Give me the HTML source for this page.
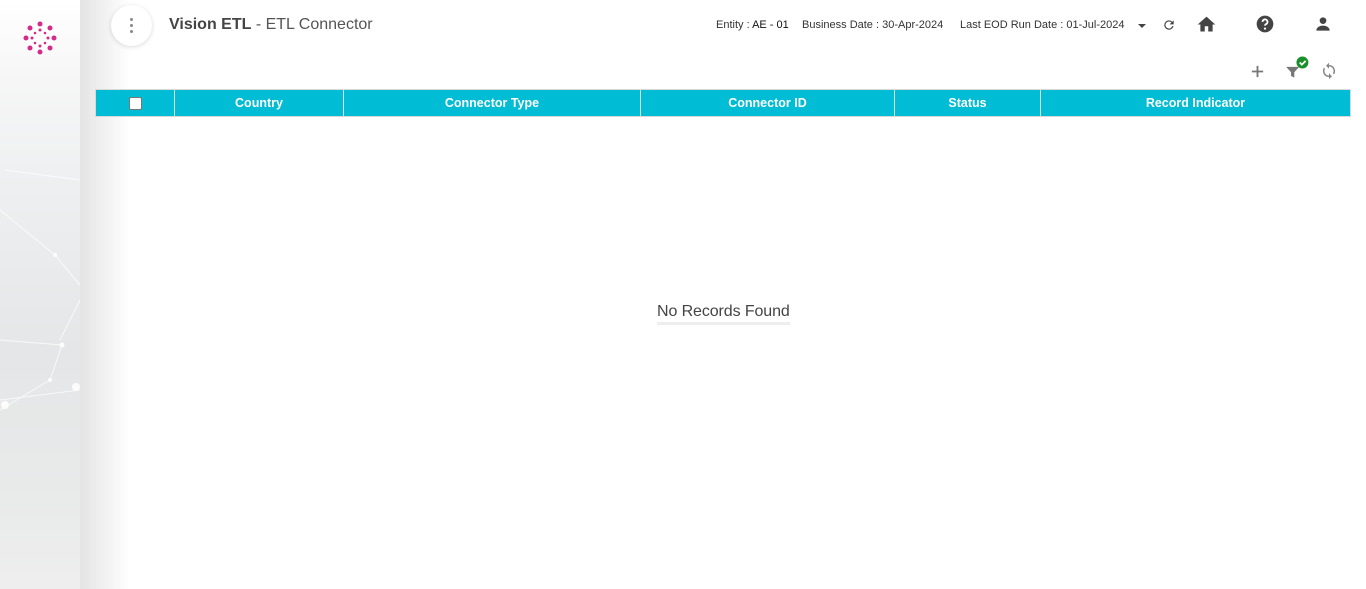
<!DOCTYPE html>
<html><head><meta charset="utf-8"><style>
*{margin:0;padding:0;box-sizing:border-box}
body{width:1366px;height:589px;overflow:hidden;background:#fff;font-family:"Liberation Sans",sans-serif;position:relative}
.side{position:absolute;left:0;top:0;width:80px;height:589px;background:linear-gradient(180deg,#fff 0%,#f7f7f7 12%,#eceeef 35%,#e4e6e7 60%,#e9eaea 85%,#eeeeee 100%);z-index:2}
.shadow{position:absolute;left:80px;top:0;width:50px;height:589px;background:linear-gradient(90deg,#e4e4e4,rgba(255,255,255,0));}
.menu{position:absolute;left:111px;top:5px;width:41px;height:41px;border-radius:50%;background:#fff;box-shadow:0 1px 5px rgba(0,0,0,.15);z-index:3}
.menu i{position:absolute;left:19px;width:3px;height:3px;border-radius:50%;background:#888}
.title{position:absolute;left:169px;top:16px;font-size:16px;color:#555}
.title b{color:#444}
.info{position:absolute;top:19px;font-size:11px;color:#333}
.hdr{position:absolute;left:95px;top:89px;width:1256px;height:28px;background:#00bcd4;display:flex;border:1px solid #d8d8d8}
.hdr div{border-right:1px solid #dde;color:#fff;font-size:12.5px;font-weight:bold;display:flex;align-items:center;justify-content:center}
.nr{position:absolute;left:657px;top:303px;font-size:16px;color:#444;border-bottom:3px solid #eee;padding-bottom:1px;letter-spacing:-.1px}
</style></head><body>
<div class="shadow"></div>
<div class="side">
<svg width="80" height="589" style="position:absolute;left:0;top:0;opacity:.9">
<g stroke="#fff" stroke-width="1" opacity=".8" fill="none">
<path d="M0 210 L55 255 L80 285"/><path d="M0 340 L62 345 L50 380 L0 410"/><path d="M80 300 L60 340"/><path d="M0 400 L80 390"/><path d="M5 170 L80 180"/>
</g>
<g fill="#fff"><circle cx="55" cy="255" r="2"/><circle cx="62" cy="345" r="2.5"/><circle cx="50" cy="380" r="2"/><circle cx="5" cy="405" r="4"/><circle cx="76" cy="387" r="4"/></g>
<circle cx="40" cy="38" r="14" fill="#fff"/>
<g fill="#d0157e">
<circle cx="40" cy="24" r="2.5"/><circle cx="40" cy="52" r="2.5"/><circle cx="26" cy="38" r="2.5"/><circle cx="54" cy="38" r="2.5"/>
<circle cx="30" cy="28" r="2.5"/><circle cx="50" cy="28" r="2.5"/><circle cx="30" cy="48" r="2.5"/><circle cx="50" cy="48" r="2.5"/>
<circle cx="40" cy="30" r="1.5"/><circle cx="40" cy="46" r="1.5"/><circle cx="32" cy="38" r="1.5"/><circle cx="48" cy="38" r="1.5"/>
<circle cx="35" cy="33" r="1.3"/><circle cx="45" cy="33" r="1.3"/><circle cx="35" cy="43" r="1.3"/><circle cx="45" cy="43" r="1.3"/>
</g></svg>
</div>
<div class="menu"><i style="top:13px"></i><i style="top:19px"></i><i style="top:25px"></i></div>
<div class="title"><b>Vision ETL</b> - ETL Connector</div>
<div class="info" style="left:716px">Entity : <span style="color:#111">AE - 01</span></div>
<div class="info" style="left:802px">Business Date : 30-Apr-2024</div>
<div class="info" style="left:960px">Last EOD Run Date : 01-Jul-2024</div>
<svg style="position:absolute;left:1137px;top:23px" width="10" height="6"><path d="M1 1h8l-4 4z" fill="#444"/></svg>
<svg style="position:absolute;left:1162px;top:18px" width="14" height="14" viewBox="0 0 24 24"><path d="M17.6 6.4A8 8 0 1 0 19.7 14h-2.1A6 6 0 1 1 12 6c1.7 0 3.1.7 4.2 1.8L13 11h7V4z" fill="#444"/></svg>
<svg style="position:absolute;left:1196px;top:14px" width="21" height="21" viewBox="0 0 24 24"><path d="M10 20v-6h4v6h5v-8h3L12 3 2 12h3v8z" fill="#444"/></svg>
<svg style="position:absolute;left:1255px;top:14px" width="20" height="20" viewBox="0 0 24 24"><circle cx="12" cy="12" r="10" fill="#444"/><path d="M9 9.5a3 3 0 1 1 4 2.8c-.7.4-1 .9-1 1.7" stroke="#fff" stroke-width="2.2" fill="none"/><circle cx="12" cy="17.5" r="1.3" fill="#fff"/></svg>
<svg style="position:absolute;left:1313px;top:14px" width="20" height="20" viewBox="0 0 24 24"><circle cx="12" cy="8" r="4" fill="#444"/><path d="M4 20c0-4 4-6 8-6s8 2 8 6z" fill="#444"/></svg>
<svg style="position:absolute;left:1249px;top:63px" width="17" height="17" viewBox="0 0 24 24"><path d="M12 4v16M4 12h16" stroke="#777" stroke-width="2.6"/></svg>
<svg style="position:absolute;left:1284px;top:56px" width="26" height="26" viewBox="0 0 24 24"><path d="M2 10h12l-4.5 5v5l-3-1.5V15z" fill="#777"/><circle cx="17" cy="6" r="5.5" fill="#1a8f2a"/><path d="M14.5 6l2 2 3.5-3.5" stroke="#fff" stroke-width="1.6" fill="none"/></svg>
<svg style="position:absolute;left:1320px;top:61px" width="18" height="20" viewBox="0 0 24 24"><path d="M12 4V1L8 5l4 4V6a6 6 0 0 1 5.2 9l1.5 1.5A8 8 0 0 0 12 4zm0 14a6 6 0 0 1-5.2-9L5.3 7.5A8 8 0 0 0 12 20v3l4-4-4-4z" fill="#888"/></svg>
<div class="hdr">
<div style="width:79px"><span style="width:13px;height:13px;background:#fff;border:1px solid #777;border-radius:2px;display:block"></span></div>
<div style="width:169px">Country</div>
<div style="width:297px">Connector Type</div>
<div style="width:254px">Connector ID</div>
<div style="width:146px">Status</div>
<div style="flex:1;border-right:none">Record Indicator</div>
</div>
<div class="nr">No Records Found</div>
</body></html>
